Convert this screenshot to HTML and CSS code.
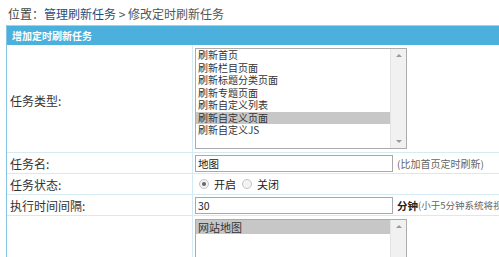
FILE: index.html
```html
<!DOCTYPE html>
<html lang="zh-CN">
<head>
<meta charset="utf-8">
<title>修改定时刷新任务</title>
<link rel="stylesheet" href="styles.css">
</head>
<body>
<div class="crumb">位置：<a class="crumb-link">管理刷新任务</a> <span class="crumb-cur">&gt; 修改定时刷新任务</span></div>
<div class="panel">
  <div class="panel-head">增加定时刷新任务</div>
  <div class="row row-type">
    <div class="label">任务类型:</div>
    <div class="value">
      <div class="listbox tall">
        <div class="items">
          <div class="item">刷新首页</div>
          <div class="item">刷新栏目页面</div>
          <div class="item">刷新标题分类页面</div>
          <div class="item">刷新专题页面</div>
          <div class="item">刷新自定义列表</div>
          <div class="item sel">刷新自定义页面</div>
          <div class="item">刷新自定义JS</div>
        </div>
        <div class="sbar"><span class="arr up"></span><span class="arr down"></span></div>
      </div>
    </div>
  </div>
  <div class="row">
    <div class="label">任务名:</div>
    <div class="value"><div class="input">地图</div><span class="hint">(比加首页定时刷新)</span></div>
  </div>
  <div class="row">
    <div class="label">任务状态:</div>
    <div class="value radios">
      <span class="radio on"></span><span class="rtext">开启</span>
      <span class="radio"></span><span class="rtext">关闭</span>
    </div>
  </div>
  <div class="row">
    <div class="label">执行时间间隔:</div>
    <div class="value"><div class="input">30</div><b class="unit">分钟</b><span class="hint hint-sm">(小于5分钟系统将视为无效)</span></div>
  </div>
  <div class="row row-last">
    <div class="label"></div>
    <div class="value">
      <div class="listbox short">
        <div class="items">
          <div class="item item-lg sel">网站地图</div>
        </div>
        <div class="sbar"><span class="arr up"></span></div>
      </div>
    </div>
  </div>
</div>
</body>
</html>
```
FILE: styles.css
```css
html, body {
  margin: 0;
  padding: 0;
  background: #fff;
  overflow: hidden;
}
body {
  font-family: "Microsoft YaHei", "Noto Sans CJK SC", "Noto Sans", sans-serif;
  font-size: 10px;
  color: #333;
  width: 499px;
  height: 257px;
}
.crumb {
  height: 25px;
  box-sizing: border-box;
  padding-left: 8px;
  padding-top: 2px;
  line-height: 24px;
  font-size: 12px;
  color: #444;
  white-space: nowrap;
}
.crumb-link { color: #1f4e7d; }
.crumb-cur { color: #555; }
.panel {
  margin-left: 6px;
  width: 620px;
  border-left: 1px solid #86c5e6;
}
.panel-head {
  height: 20px;
  box-sizing: border-box;
  border-top: 1px solid #98d5ee;
  background: #4cb0dc;
  color: #fff;
  font-weight: bold;
  line-height: 19px;
  padding-left: 5px;
  white-space: nowrap;
}
.row {
  display: grid;
  grid-template-columns: 186px 1fr;
  border-bottom: 1px solid #d6eaf4;
  height: 21px;
  box-sizing: border-box;
}
.row-type { height: 108px; }
.row-last { height: 60px; border-bottom: none; }
.label {
  border-right: 1px solid #d6eaf4;
  padding-left: 3px;
  display: flex;
  align-items: center;
  color: #333;
  font-size: 12px;
  white-space: nowrap;
}
.row-type .label { padding-top: 4px; }
.value {
  padding-left: 2px;
  display: flex;
  align-items: center;
  white-space: nowrap;
}
.row-type .value, .row-last .value { align-items: flex-start; padding-top: 3px; }
.listbox {
  width: 212px;
  box-sizing: border-box;
  border: 1px solid #acacac;
  display: flex;
  background: #fff;
}
.listbox.tall { height: 101px; }
.listbox.short { height: 60px; }
.items { flex: 1; }
.item {
  height: 12.5px;
  line-height: 12.5px;
  padding-left: 2px;
  color: #333;
}
.item-lg { font-size: 11px; height: 14px; line-height: 14px; }
.item.sel { background: #c7c7c7; }
.sbar {
  width: 15px;
  background: #f1f1f1;
  border-left: 1px solid #e4e4e4;
  position: relative;
}
.arr {
  position: absolute;
  left: 5px;
  width: 0;
  height: 0;
  border-left: 3px solid transparent;
  border-right: 3px solid transparent;
}
.arr.up { top: 5px; border-bottom: 3px solid #9a9a9a; }
.arr.down { bottom: 5px; border-top: 3px solid #9a9a9a; }
.input {
  width: 198px;
  height: 17px;
  box-sizing: border-box;
  border: 1px solid #a9a9a9;
  line-height: 15px;
  padding-left: 2px;
  font-size: 10.5px;
  color: #222;
}
.hint { color: #666; margin-left: 4px; }
.hint-sm { font-size: 9.5px; }
.unit { color: #222; margin-left: 4px; font-size: 10.5px; }
.unit + .hint { margin-left: 0; }
.radios { padding-left: 6px; }
.radio {
  width: 10px;
  height: 10px;
  box-sizing: border-box;
  border-radius: 50%;
  border: 1px solid #c4c4c4;
  background: #f3f3f3;
  display: inline-flex;
  align-items: center;
  justify-content: center;
}
.radio.on::after {
  content: "";
  width: 4px;
  height: 4px;
  border-radius: 50%;
  background: #666;
}
.rtext { margin-left: 5px; margin-right: 6px; color: #222; font-size: 11px; }
```
